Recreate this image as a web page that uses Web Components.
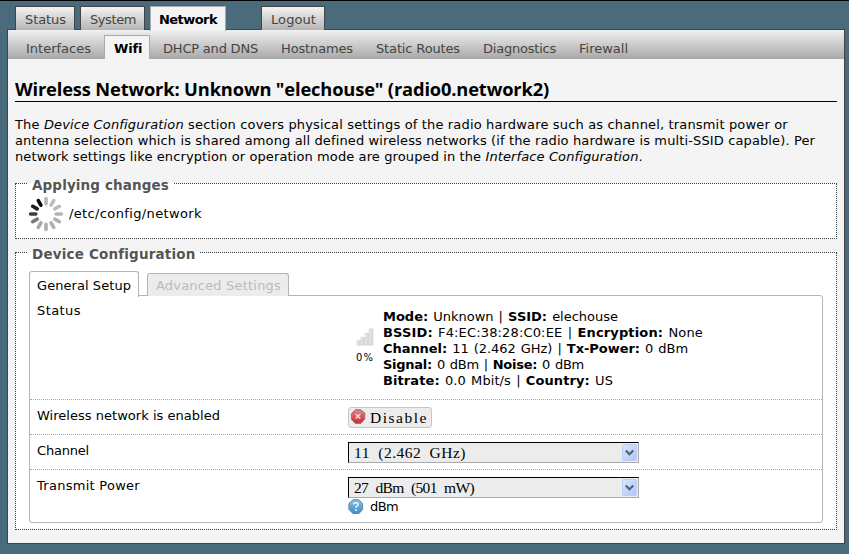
<!DOCTYPE html>
<html lang="en">
<head>
<meta charset="utf-8">
<title>Wireless Network</title>
<style>
html,body{margin:0;height:554px;overflow:hidden;background:#4a6b7c}
body{font:13px/16px "DejaVu Sans",sans-serif;color:#000}
</style>
</head>
<body>
<router-page></router-page>
<script>
function define(name, html, init){
  const t=document.createElement('template');
  t.innerHTML=html;
  customElements.define(name, class extends HTMLElement{
    connectedCallback(){
      if(this.shadowRoot) return;
      this.attachShadow({mode:'open'}).appendChild(t.content.cloneNode(true));
      if(init) init.call(this,this.shadowRoot);
    }
  });
}

/* A single line of text tracked to fill a given width. */
define('text-run', `<style>:host{display:block;white-space:pre}span{display:inline-block}</style><span><slot></slot></span>`, function(r){
  const w=+this.getAttribute('w'), s=r.querySelector('span');
  this.style.width=w+'px';
  const n=this.textContent.length;
  s.style.letterSpacing=((w-s.getBoundingClientRect().width)/n).toFixed(3)+'px';
});

define('main-tab', `<style>
:host{display:block;box-sizing:border-box;height:24px;border:1px solid #444;border-bottom:0;background:linear-gradient(#f4f4f4,#b4b4b4);color:#444;padding:5px 0 0 9px}
:host([active]){background:#f4f4f4;border-color:#aaa;color:#000;font-weight:bold;padding-left:8px;height:25px;margin-bottom:-1px}
</style><slot></slot>`, function(){this.style.width=this.getAttribute('box')+'px'});

define('sub-tab', `<style>
:host{display:block;box-sizing:border-box;height:24px;padding:6px 0 0;color:#444}
:host([active]){background:#f4f4f4;border:1px solid #aaa;border-bottom:0;color:#000;font-weight:bold;width:46px;padding:5px 0 0 9px}
</style><slot></slot>`);

define('field-group', `<style>
:host{display:block;position:relative;box-sizing:border-box;border:1px dotted #333c44;background:#fff}
.legend{position:absolute;left:12px;top:-7px;padding:0 4px;color:#555;font-weight:bold;font-size:13.5px;line-height:16px;background:linear-gradient(#f4f4f4 6px,#fff 6px)}
</style><div class="legend"><slot name="legend"></slot></div><slot></slot>`);

define('busy-spinner', `<style>:host{display:block;width:36px;height:36px}svg{display:block}</style>
<svg width="36" height="36" viewBox="-18 -18 36 36" stroke-width="3.6" stroke-linecap="round"></svg>`, function(r){
  const shades=['#b8b8b8','#bcbcbc','#bcbcbc','#b4b4b4','#b0b0b0','#b0b0b0','#b0b0b0','#a8a8a8','#787878','#3c3c3c','#1c1c1c','#080808'];
  r.querySelector('svg').innerHTML=shades.map((c,i)=>`<path d="M0-15.4V-10.2" stroke="${c}" transform="rotate(${i*30})"/>`).join('');
});

define('signal-icon', `<style>:host{display:block;width:18px;height:18px}svg{display:block}</style>
<svg width="18" height="18"><defs><linearGradient id="g" x2="1"><stop stop-color="#eeeeec"/><stop offset="1" stop-color="#d0d0cc"/></linearGradient></defs>
<g fill="url(#g)" stroke="#d0d0cc" stroke-width=".6"><path d="M.8 12.3h3.6v4.9H.8z"/><path d="M4.9 9.3h3.6v7.9H4.9z"/><path d="M9 5.3h3.6v11.9H9z"/><path d="M13 .8h3.9v16.4H13z"/></g></svg>`);

define('octagon-icon', `<style>:host{display:block;width:16px;height:16px}svg{display:none}:host([kind=stop]) .s,:host([kind=help]) .h{display:block}</style>
<svg class="s" width="16" height="16"><defs><linearGradient id="r" y2="1" x2="0"><stop stop-color="#e2878a"/><stop offset="1" stop-color="#c72b35"/></linearGradient></defs><path d="M4.5 .7h5L13.7 4v6L10 14.3H4.2L.6 10.5V4.5z" fill="url(#r)" stroke="#b45a60"/><path d="M4.7 5 9.3 9.6M9.3 5 4.7 9.6" stroke="#f8dcdc" stroke-width="1.4"/></svg>
<svg class="h" width="16" height="16"><defs><linearGradient id="b" y2="1" x2="0"><stop stop-color="#8cbde0"/><stop offset="1" stop-color="#3f8fc8"/></linearGradient></defs><path d="M5 .8h6L14.6 4.5v6L11 14.5H5L.9 10.5v-6z" fill="url(#b)" stroke="#528bb0"/><path d="M5.7 5.4C5.9 3.2 10 3.1 10 5.4c0 1.5-2.1 1.6-2.1 3.3M7.9 10.3v1.6" fill="none" stroke="#eef6fc" stroke-width="1.6"/></svg>`);

define('drop-down', `<style>
:host{display:flex;justify-content:space-between;box-sizing:border-box;width:291px;height:21px;border:1px solid;border-color:#000 #aaa #aaa #000;background:#ececec;font:15.5px/20px "Liberation Serif","Noto Sans CJK SC",serif;word-spacing:4px;padding:0 0 0 5px}
svg{display:block;margin-top:1px}
</style><slot></slot><svg width="16" height="17"><defs><linearGradient id="d" x2="1" y2="1"><stop stop-color="#dce6fd"/><stop offset="1" stop-color="#afc6f6"/></linearGradient></defs><rect x=".5" y=".5" width="14" height="16" rx="1" fill="url(#d)" stroke="#bccdf5"/><path d="M3.8 6.5 7.5 10.2 11.2 6.5" fill="none" stroke="#4d6185" stroke-width="2.2"/></svg>`);

define('push-button', `<style>
:host{display:flex;box-sizing:border-box;width:84px;height:21px;border:1px solid #c6c6c6;border-radius:3px;background:#ececec;gap:3px;padding:1px 0 0 2px;font:15.5px/18px "Liberation Serif","Noto Sans CJK SC",serif}
</style><octagon-icon kind="stop"></octagon-icon><slot></slot>`);

define('option-row', `<style>
:host{display:flex;box-sizing:border-box;border-bottom:1px dotted #aaa;height:35px}
:host([last]){border:0;height:52px}
.label{width:311px;padding:8px 0 0 7px}
:host(.status) .label{padding-top:7px}
.value{padding-top:7px}
</style><div class="label"><slot name="label"></slot></div><div class="value"><slot></slot></div>`);

define('tab-strip', `<style>
:host{display:flex;gap:8px;align-items:flex-end;height:25px;margin-bottom:-1px;position:relative}
div{box-sizing:border-box;border:1px solid #b4b4b4;border-radius:3px 3px 0 0}
.on{width:110px;height:26px;margin-bottom:-1px;background:#fff;border-bottom:0;padding:6px 0 0 7px}
.off{width:142px;height:23px;background:#ececec;border-bottom:0;color:#bbb;padding:4px 0 0 8px}
</style><div class="on"><slot name="on"></slot></div><div class="off"><slot name="off"></slot></div>`);

define('router-page', `<style>
:host{display:block;box-sizing:border-box;width:849px;height:554px;border-top:1px solid #000;padding:5px 4px 0 7px}
.main{display:flex;padding-left:8px;height:23px}
.main main-tab{margin-right:5px}
.main main-tab:nth-child(3){margin-right:35px}
.frame{box-sizing:border-box;width:838px;height:515px;border:1px solid #444;background:#f4f4f4}
.sub{display:flex;align-items:flex-end;height:29px;background:linear-gradient(#f0f0f0,#a8a8a8);padding-left:17px}
.body{padding:17px 7px 0}
h2{margin:0;font:bold 18.3px/25px "Open Sans",sans-serif;border-bottom:1px solid #000;height:25px;width:822px}
.intro{margin-top:15px}
field-group{width:822px}
.one{height:56px;margin-top:18px}
.two{height:278px;margin-top:13px}
.busy{display:flex;padding:12px 0 0 12px;gap:5px}
.busy text-run{margin-top:10px}
.tabs{padding:18px 13px 0}
.panel{box-sizing:border-box;width:794px;height:228px;border:1px solid #b4b4b4;border-radius:0 3px 3px 3px}
.status{height:104px}
.state{display:flex;padding-top:6px;gap:9px}
.info{word-spacing:1px}
.sig{padding:19px 0 0 8px;width:18px;font-size:10px}
.hint{display:flex;gap:6px;margin-top:1px}
</style>
<nav class="main">
<main-tab box="60"><text-run w="41">Status</text-run></main-tab>
<main-tab box="65"><text-run w="46">System</text-run></main-tab>
<main-tab box="76" active><text-run w="58">Network</text-run></main-tab>
<main-tab box="64"><text-run w="45">Logout</text-run></main-tab>
</nav>
<div class="frame">
<nav class="sub">
<sub-tab style="width:79px;padding-left:1px"><text-run w="65">Interfaces</text-run></sub-tab>
<sub-tab active><text-run w="28">Wifi</text-run></sub-tab>
<sub-tab style="width:131px;padding-left:13px"><text-run w="95">DHCP and DNS</text-run></sub-tab>
<sub-tab style="width:95px"><text-run w="72">Hostnames</text-run></sub-tab>
<sub-tab style="width:107px"><text-run w="84">Static Routes</text-run></sub-tab>
<sub-tab style="width:96px"><text-run w="73">Diagnostics</text-run></sub-tab>
<sub-tab><text-run w="49">Firewall</text-run></sub-tab>
</nav>
<div class="body">
<h2><text-run w="534">Wireless Network: Unknown "elechouse" (radio0.network2)</text-run></h2>
<div class="intro">
<text-run w="773">The <em>Device Configuration</em> section covers physical settings of the radio hardware such as channel, transmit power or</text-run>
<text-run w="800">antenna selection which is shared among all defined wireless networks (if the radio hardware is multi-SSID capable). Per</text-run>
<text-run w="628">network settings like encryption or operation mode are grouped in the <em>Interface Configuration</em>.</text-run>
</div>
<field-group class="one"><text-run slot="legend" w="137">Applying changes</text-run>
<div class="busy"><busy-spinner></busy-spinner><text-run w="133">/etc/config/network</text-run></div>
</field-group>
<field-group class="two"><text-run slot="legend" w="163">Device Configuration</text-run>
<div class="tabs">
<tab-strip><text-run slot="on" w="94">General Setup</text-run><text-run slot="off" w="125">Advanced Settings</text-run></tab-strip>
<div class="panel">
<option-row class="status"><text-run slot="label" w="44">Status</text-run>
<div class="state"><div class="sig"><signal-icon></signal-icon><text-run w="18" style="margin-top:4px">0%</text-run></div>
<div class="info">
<text-run w="235"><b>Mode:</b> Unknown | <b>SSID:</b> elechouse</text-run>
<text-run w="320"><b>BSSID:</b> F4:EC:38:28:C0:EE | <b>Encryption:</b> None</text-run>
<text-run w="305"><b>Channel:</b> 11 (2.462 GHz) | <b>Tx-Power:</b> 0 dBm</text-run>
<text-run w="201"><b>Signal:</b> 0 dBm | <b>Noise:</b> 0 dBm</text-run>
<text-run w="230"><b>Bitrate:</b> 0.0 Mbit/s | <b>Country:</b> US</text-run>
</div></div></option-row>
<option-row><text-run slot="label" w="183">Wireless network is enabled</text-run><push-button><text-run w="58">Disable</text-run></push-button></option-row>
<option-row><text-run slot="label" w="52">Channel</text-run><drop-down><text-run w="112">11 (2.462 GHz)</text-run></drop-down></option-row>
<option-row last><text-run slot="label" w="103">Transmit Power</text-run><drop-down><text-run w="120">27 dBm (501 mW)</text-run></drop-down>
<div class="hint"><octagon-icon kind="help"></octagon-icon><text-run w="28">dBm</text-run></div></option-row>
</div></div>
</field-group>
</div></div>`);
</script>
</body>
</html>
